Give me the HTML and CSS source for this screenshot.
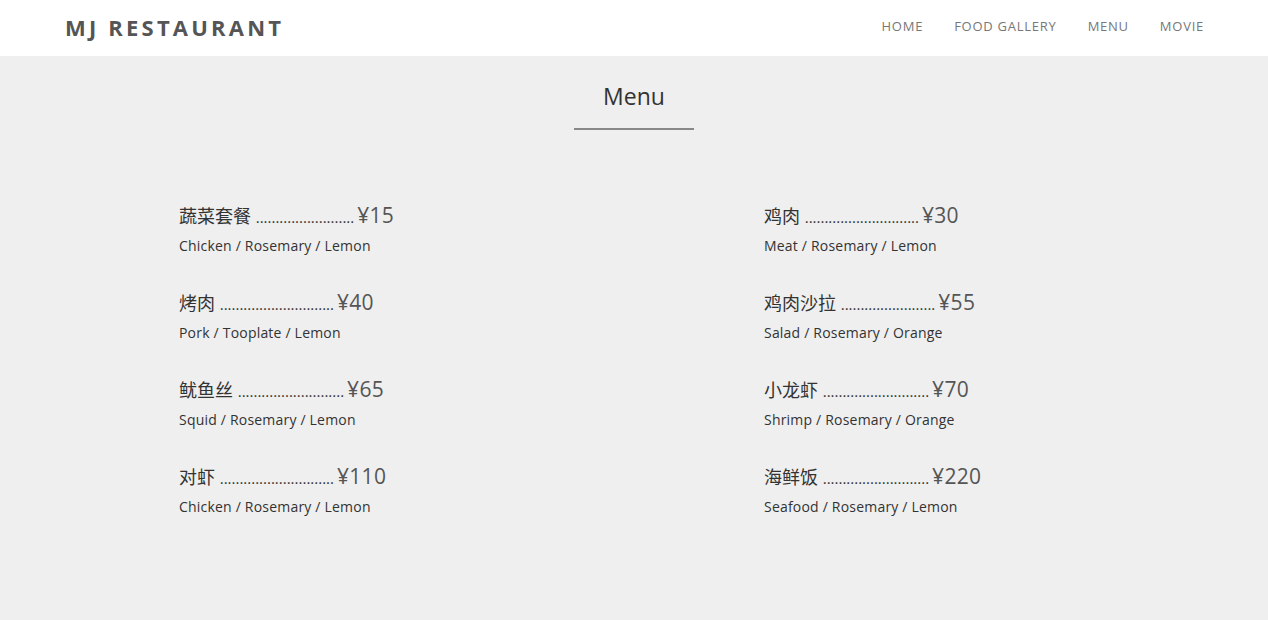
FILE: index.html
```html
<!DOCTYPE html>
<html lang="zh">
<head>
<meta charset="utf-8">
<title>MJ Restaurant</title>
<link rel="stylesheet" href="styles.css">
</head>
<body>
<header class="topbar">
  <div class="brand">MJ RESTAURANT</div>
  <nav class="nav">
    <a href="#">HOME</a>
    <a href="#">FOOD GALLERY</a>
    <a href="#">MENU</a>
    <a href="#">MOVIE</a>
  </nav>
</header>
<main class="menu">
  <h2 class="menu-title">Menu</h2>
  <div class="menu-grid">
    <div class="col">
      <div class="item"><div class="name">蔬菜套餐 <span class="dots">.........................</span><span class="price">¥15</span></div><div class="desc">Chicken / Rosemary / Lemon</div></div>
      <div class="item"><div class="name">烤肉 <span class="dots">.............................</span><span class="price">¥40</span></div><div class="desc">Pork / Tooplate / Lemon</div></div>
      <div class="item"><div class="name">鱿鱼丝 <span class="dots">...........................</span><span class="price">¥65</span></div><div class="desc">Squid / Rosemary / Lemon</div></div>
      <div class="item"><div class="name">对虾 <span class="dots">.............................</span><span class="price">¥110</span></div><div class="desc">Chicken / Rosemary / Lemon</div></div>
    </div>
    <div class="col">
      <div class="item"><div class="name">鸡肉 <span class="dots">.............................</span><span class="price">¥30</span></div><div class="desc">Meat / Rosemary / Lemon</div></div>
      <div class="item"><div class="name">鸡肉沙拉 <span class="dots">........................</span><span class="price">¥55</span></div><div class="desc">Salad / Rosemary / Orange</div></div>
      <div class="item"><div class="name">小龙虾 <span class="dots">...........................</span><span class="price">¥70</span></div><div class="desc">Shrimp / Rosemary / Orange</div></div>
      <div class="item"><div class="name">海鲜饭 <span class="dots">...........................</span><span class="price">¥220</span></div><div class="desc">Seafood / Rosemary / Lemon</div></div>
    </div>
  </div>
</main>
</body>
</html>
```
FILE: styles.css
```css
* { box-sizing: border-box; }
html, body { margin: 0; padding: 0; }
body {
  background: #efefef;
  font-family: "Open Sans", "Noto Sans CJK SC", sans-serif;
  color: #333;
  height: 620px;
  overflow: hidden;
}
.topbar {
  height: 56px;
  background: #fff;
  display: flex;
  align-items: center;
  justify-content: space-between;
  padding: 0 64px 0 65px;
}
.brand {
  font-size: 22px;
  font-weight: 700;
  letter-spacing: 3.2px;
  color: #555;
  margin-top: -2px;
}
.nav {
  display: flex;
  gap: 31px;
  margin-top: -4px;
}
.nav a {
  font-size: 13px;
  letter-spacing: 0.75px;
  color: #777;
  text-decoration: none;
}
.menu-title {
  margin: 0 auto;
  width: 120px;
  text-align: center;
  font-size: 23px;
  font-weight: 400;
  color: #333;
  padding-top: 24px;
  padding-bottom: 16px;
  line-height: 32px;
  border-bottom: 2px solid #888;
}
.menu-grid {
  width: 1170px;
  margin: 72px auto 0;
  display: grid;
  grid-template-columns: 585px 585px;
}
.col { padding-left: 130px; }
.item { height: 87px; }
.name {
  font-size: 18px;
  line-height: 26px;
  color: #333;
  white-space: nowrap;
}
.dots { font-size: 15px; letter-spacing: 0; margin-right: 3px; }
.price { font-size: 21px; color: #555; letter-spacing: 0.3px; }
.desc {
  font-size: 14px;
  line-height: 20px;
  margin-top: 6px;
  color: #333;
  letter-spacing: 0.2px;
}
```
